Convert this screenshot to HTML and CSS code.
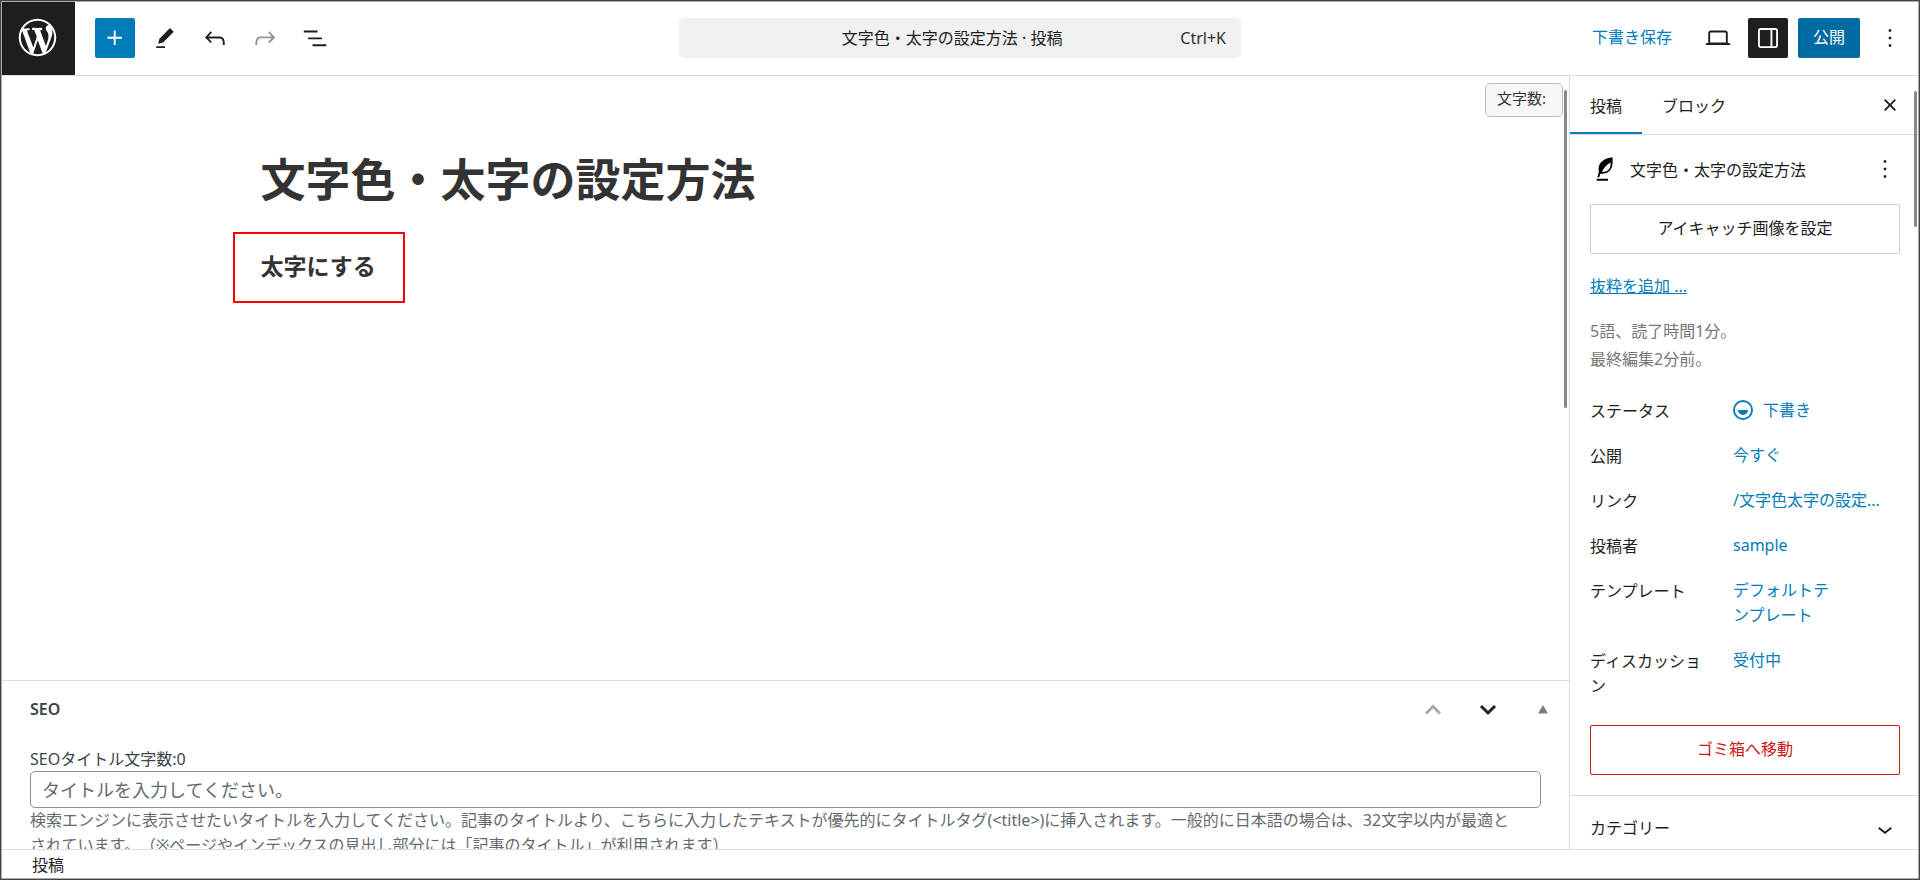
FILE: index.html
```html
<!DOCTYPE html>
<html lang="ja">
<head>
<meta charset="utf-8">
<title>文字色・太字の設定方法 · 投稿</title>
<link rel="stylesheet" href="styles.css">
</head>
<body>
<div class="app">
  <header class="header">
    <a class="logo" href="#" aria-label="投稿一覧">
      <svg viewBox="-2 -2 24 24"><path d="M20 10c0-5.51-4.49-10-10-10C4.48 0 0 4.49 0 10c0 5.52 4.48 10 10 10 5.51 0 10-4.48 10-10zM7.78 15.37L4.37 6.22c.55-.02 1.17-.08 1.17-.08.5-.06.44-1.13-.06-1.11 0 0-1.45.11-2.37.11-.18 0-.37 0-.58-.01C4.12 2.69 6.87 1.11 10 1.11c2.33 0 4.45.87 6.05 2.34-.68-.11-1.65.39-1.65 1.58 0 .74.45 1.36.9 2.1.35.61.55 1.36.55 2.46 0 1.49-1.4 5-1.4 5l-3.03-8.37c.54-.02.82-.17.82-.17.5-.05.44-1.25-.06-1.22 0 0-1.44.12-2.38.12-.87 0-2.33-.12-2.33-.12-.5-.03-.56 1.2-.06 1.22l.92.08 1.26 3.41zM17.41 10c.24-.64.74-1.87.43-4.25.7 1.29 1.05 2.71 1.05 4.25 0 3.29-1.73 6.24-4.4 7.78.97-2.59 1.94-5.2 2.92-7.78zM6.1 18.09C3.12 16.65 1.11 13.53 1.11 10c0-1.3.23-2.48.72-3.59C3.25 10.3 4.67 14.2 6.1 18.09zm4.03-6.63l2.58 6.98c-.86.29-1.76.45-2.71.45-.79 0-1.57-.11-2.29-.33.81-2.38 1.62-4.74 2.42-7.1z"/></svg>
    </a>
    <div class="tools tools-left">
      <button class="icon-button add" type="button" aria-label="ブロックを追加"><svg class="icon" viewBox="0 0 24 24"><path d="M11 12.5V17.5H12.5V12.5H17.5V11H12.5V6H11V11H6V12.5H11Z"/></svg></button>
      <button class="icon-button" type="button" aria-label="ツール"><svg class="icon" viewBox="0 0 24 24"><path d="m19 7-3-3-8.5 8.5-1 4 4-1L19 7Zm-7 11.5H5V20h7v-1.5Z"/></svg></button>
      <button class="icon-button" type="button" aria-label="元に戻す"><svg class="icon" viewBox="0 0 24 24"><path d="M18.3 11.7c-.6-.6-1.4-.9-2.3-.9H6.7l2.9-3.3-1.1-1-4.5 5L8.5 16l1-1-2.7-2.7H16c.5 0 .9.2 1.3.5 1 1 1 3.4 1 4.5v.3h1.5v-.2c0-1.5 0-4.3-1.5-5.7z"/></svg></button>
      <button class="icon-button" type="button" aria-label="やり直す" disabled><svg class="icon" viewBox="0 0 24 24"><path d="M15.6 6.5l-1.1 1 2.9 3.3H8c-.9 0-1.7.3-2.3.9-1.4 1.5-1.4 4.2-1.4 5.6v.2h1.5v-.3c0-1.1 0-3.5 1-4.5.3-.3.7-.5 1.3-.5h9.2L14.5 15l1.1 1.1 4.6-4.6-4.6-5z"/></svg></button>
      <button class="icon-button" type="button" aria-label="ドキュメント概観"><svg class="icon" viewBox="0 0 24 24"><path d="M3 6h11v1.5H3V6Zm3.5 5.5h11V13h-11v-1.5ZM21 17H10v1.5h11V17Z"/></svg></button>
    </div>
    <button class="command" type="button"><span class="command-title">文字色・太字の設定方法 · 投稿</span><span class="command-key">Ctrl+K</span></button>
    <div class="tools tools-right">
      <button class="text-button" type="button">下書き保存</button>
      <button class="icon-button" type="button" aria-label="表示"><svg class="icon" viewBox="0 0 24 24"><path d="M20.5 16h-.7V8c0-1.1-.9-2-2-2H6.2c-1.1 0-2 .9-2 2v8h-.7c-.8 0-1.5.7-1.5 1.5h20c0-.8-.7-1.5-1.5-1.5zM5.7 8c0-.3.2-.5.5-.5h11.6c.3 0 .5.2.5.5v7.6H5.7V8z"/></svg></button>
      <button class="icon-button pressed" type="button" aria-label="設定" aria-pressed="true"><svg class="icon" viewBox="0 0 24 24"><path fill-rule="evenodd" d="M18 4H6c-1.1 0-2 .9-2 2v12c0 1.1.9 2 2 2h12c1.1 0 2-.9 2-2V6c0-1.1-.9-2-2-2zm-4 14.5H6c-.3 0-.5-.2-.5-.5V6c0-.3.2-.5.5-.5h8v13zm4.5-.5c0 .3-.2.5-.5.5h-2.5v-13H18c.3 0 .5.2.5.5v12z"/></svg></button>
      <button class="publish" type="button">公開</button>
      <button class="icon-button" type="button" aria-label="オプション"><svg class="icon" viewBox="0 0 24 24"><path d="M13 19h-2v-2h2v2zm0-6h-2v-2h2v2zm0-6h-2V5h2v2z"/></svg></button>
    </div>
  </header>

  <div class="body">
    <main class="editor">
      <section class="canvas">
        <div class="post">
          <h1 class="post-title">文字色・太字の設定方法</h1>
          <p class="post-block"><strong>太字にする</strong></p>
        </div>
        <div class="char-count">文字数:</div>
        <div class="scrollbar canvas-scrollbar"></div>
      </section>
      <section class="metabox">
        <div class="metabox-header">
          <h2 class="metabox-title">SEO</h2>
          <div class="metabox-actions">
            <button class="metabox-button" type="button" aria-label="上に移動" disabled><svg class="arrow" viewBox="0 0 20 20"><path d="M3 13.500l7-7 7 7"/></svg></button>
            <button class="metabox-button" type="button" aria-label="下に移動"><svg class="arrow" viewBox="0 0 20 20"><path d="M3 6l7 7 7-7"/></svg></button>
            <button class="metabox-button" type="button" aria-label="パネルを切り替え"><svg class="triangle" viewBox="0 0 20 20"><path d="M10 5l5 8.500H5z"/></svg></button>
          </div>
        </div>
        <div class="metabox-content">
          <label class="field-label" for="seo-title">SEOタイトル文字数:0</label>
          <input class="field-input" id="seo-title" type="text" placeholder="タイトルを入力してください。">
          <p class="field-help">検索エンジンに表示させたいタイトルを入力してください。記事のタイトルより、こちらに入力したテキストが優先的にタイトルタグ(&lt;title&gt;)に挿入されます。一般的に日本語の場合は、32文字以内が最適と<br>されています。（※ページやインデックスの見出し部分には「記事のタイトル」が利用されます）</p>
        </div>
      </section>
    </main>

    <aside class="sidebar">
      <div class="tabs">
        <button class="tab active" type="button">投稿</button>
        <button class="tab" type="button">ブロック</button>
        <button class="icon-button close" type="button" aria-label="設定を閉じる"><svg class="icon" viewBox="0 0 24 24"><path d="M12 13.06l3.712 3.713 1.061-1.06L13.061 12l3.712-3.712-1.06-1.06L12 10.938 8.288 7.227l-1.061 1.06L10.939 12l-3.712 3.712 1.06 1.061L12 13.061z"/></svg></button>
      </div>
      <div class="panel">
        <div class="card">
          <svg class="icon quill" viewBox="0 0 24 24"><path fill-rule="evenodd" d="M18 2.500C12.500 3.200 8.500 5.600 7.300 9.200c-.6 1.900-.5 3.800-.2 5.300L5.800 18.500h1.500l1-2.700c3.600.2 6.800-.8 8.400-3.600C18.200 9.500 18.300 6 18 2.500zM16.500 6.800c.1 2-.3 4-1.300 5.300-1.200 1.600-3.200 2.300-5.600 2.200 1.500-3.300 3.600-5.900 6.900-7.500zM5.400 19.800h9v1.500h-9z"/></svg>
          <h2 class="card-title">文字色・太字の設定方法</h2>
          <button class="icon-button" type="button" aria-label="操作"><svg class="icon" viewBox="0 0 24 24"><path d="M13 19h-2v-2h2v2zm0-6h-2v-2h2v2zm0-6h-2V5h2v2z"/></svg></button>
        </div>
        <button class="wide-button" type="button">アイキャッチ画像を設定</button>
        <a class="excerpt-link" href="#">抜粋を追加 ...</a>
        <p class="stats">5語、読了時間1分。<br>最終編集2分前。</p>
        <dl class="rows">
          <div class="row"><dt>ステータス</dt><dd><button class="value" type="button"><svg class="icon" viewBox="0 0 24 24"><path fill-rule="evenodd" d="M12 18.500a6.500 6.500 0 1 1 0-13 6.500 6.500 0 0 1 0 13ZM4 12a8 8 0 1 1 16 0 8 8 0 0 1-16 0Zm8 4a4 4 0 0 0 4-4H8a4 4 0 0 0 4 4Z"/></svg>下書き</button></dd></div>
          <div class="row"><dt>公開</dt><dd><button class="value" type="button">今すぐ</button></dd></div>
          <div class="row"><dt>リンク</dt><dd><button class="value" type="button">/文字色太字の設定...</button></dd></div>
          <div class="row"><dt>投稿者</dt><dd><button class="value" type="button">sample</button></dd></div>
          <div class="row"><dt>テンプレート</dt><dd><button class="value" type="button">デフォルトテ<br>ンプレート</button></dd></div>
          <div class="row"><dt>ディスカッション</dt><dd><button class="value" type="button">受付中</button></dd></div>
        </dl>
        <button class="wide-button danger" type="button">ゴミ箱へ移動</button>
      </div>
      <button class="section-toggle" type="button">カテゴリー<svg class="icon" viewBox="0 0 24 24"><path d="M17.500 11.600L12 16l-5.500-4.400.9-1.200L12 14l4.500-3.600 1 1.200z"/></svg></button>
      <div class="scrollbar sidebar-scrollbar"></div>
    </aside>
  </div>

  <footer class="footer">投稿</footer>
</div>
</body>
</html>
```

FILE: styles.css
```css
* {
  box-sizing: border-box;
}

body {
  margin: 0;
  border: 1px solid #444;
  background: #fff;
  color: #1e1e1e;
  font-family: "Noto Sans", "Noto Sans CJK JP", sans-serif;
  font-size: 16px;
  line-height: 25px;
  text-spacing-trim: space-all;
}

h1, h2, p, dl, dd {
  margin: 0;
}

button {
  margin: 0;
  padding: 0;
  border: 0;
  background: none;
  color: inherit;
  font: inherit;
  cursor: pointer;
}

svg {
  display: block;
  flex: none;
  fill: currentColor;
}

.app {
  display: flex;
  flex-direction: column;
  height: calc(100vh - 2px);
  border: 1px solid #aaa;
  overflow: hidden;
}

.icon {
  width: 30px;
  height: 30px;
}

/* Header */

.header {
  display: grid;
  grid-template-columns: 1fr minmax(0, 562px) 1fr;
  align-items: center;
  flex: none;
  border-bottom: 1px solid #ddd;
}

.logo,
.tools-left {
  grid-row: 1;
  grid-column: 1;
}

.logo {
  display: grid;
  place-items: center;
  width: 73px;
  height: 73px;
  padding: 0 2px 2px 0;
  background: #1e1e1e;
  color: #fff;
}

.logo svg {
  width: 45px;
  height: 45px;
}

.tools {
  display: flex;
  align-items: center;
  gap: 10px;
  padding-bottom: 1px;
}

.tools-left {
  margin-left: 93px;
}

.tools-right {
  justify-content: flex-end;
  padding-right: 8px;
}

.icon-button {
  display: grid;
  place-items: center;
  flex: none;
  width: 40px;
  height: 40px;
  border-radius: 2px;
}

.icon-button:disabled {
  color: #949494;
}

.add {
  background: #007cba;
  color: #fff;
}

.pressed {
  background: #1e1e1e;
  color: #fff;
}

.command {
  display: flex;
  align-items: center;
  height: 40px;
  margin-bottom: 1px;
  padding: 0 15px 0 45px;
  border-radius: 5px;
  background: #f0f0f0;
}

.command-title {
  flex: 1;
}

.command-key {
  color: #2f2f2f;
}

.text-button {
  height: 40px;
  padding: 0 16px 2px;
  color: #007cba;
}

.publish {
  height: 40px;
  padding: 0 15px 2px;
  border-radius: 2px;
  background: #006ba1;
  color: #fff;
}

/* Editor */

.body {
  display: flex;
  flex: 1;
  min-height: 0;
}

.editor {
  display: flex;
  flex: 1;
  flex-direction: column;
  min-width: 0;
}

.canvas {
  position: relative;
  flex: 1;
  padding-top: 69px;
}

.post {
  width: 67%;
  margin: 0 auto;
  color: #333;
}

.post-title {
  font-size: 45px;
  line-height: 70px;
}

.post-block {
  width: fit-content;
  margin: 17px 0 0 -28px;
  padding: 17px 27px 20px 26px;
  border: 2px solid #f00;
  font-size: 23px;
  line-height: 30px;
}

.char-count {
  position: absolute;
  top: 7px;
  right: 6px;
  padding: 2px 16px 5px 11px;
  border: 1px solid #bbb;
  border-radius: 5px;
  background: #f7f7f7;
  color: #333;
  font-size: 15px;
}

.scrollbar {
  position: absolute;
  width: 3px;
  border-radius: 2px;
  background: #888;
}

.canvas-scrollbar {
  top: 14px;
  right: 2px;
  height: 318px;
}

/* Meta box */

.metabox {
  flex: none;
  height: 169px;
  padding: 0 28px;
  border-top: 1px solid #ddd;
  overflow: hidden;
  color: #3c434a;
}

.metabox-header {
  display: flex;
  align-items: center;
  justify-content: space-between;
  height: 57px;
}

.metabox-title {
  font-size: 16px;
  font-weight: 600;
}

.metabox-actions {
  display: flex;
  gap: 10px;
  margin-right: -24px;
}

.metabox-button {
  display: grid;
  place-items: center;
  width: 45px;
  height: 45px;
  color: #1d2327;
}

.metabox-button:disabled {
  color: #a7aaad;
}

.arrow {
  width: 20px;
  height: 20px;
  fill: none;
  stroke: currentColor;
  stroke-width: 3;
}

.triangle {
  width: 20px;
  height: 20px;
  color: #787c82;
}

.metabox-content {
  padding-top: 10px;
}

.field-label {
  display: block;
  line-height: 23px;
}

.field-input {
  display: block;
  width: 100%;
  height: 37px;
  padding: 0 11px;
  border: 1px solid #8c8f94;
  border-radius: 5px;
  background: #fff;
  color: #2c3338;
  font: inherit;
  font-size: 18px;
}

.field-input::placeholder {
  color: #646970;
}

.field-help {
  color: #646970;
  white-space: nowrap;
}

/* Sidebar */

.sidebar {
  position: relative;
  flex: none;
  width: 349px;
  border-left: 1px solid #ddd;
  overflow: hidden;
}

.tabs {
  display: flex;
  align-items: stretch;
  height: 59px;
  padding-right: 8px;
  border-bottom: 1px solid #ddd;
}

.tab {
  padding: 2px 20px 0;
}

.tab.active {
  box-shadow: inset 0 -2px #007cba;
}

.close {
  align-self: center;
  margin-left: auto;
}

.panel {
  padding: 14px 18px 20px 20px;
  border-bottom: 1px solid #ddd;
}

.card {
  display: flex;
  align-items: center;
  gap: 10px;
  margin: 0 -5px 15px 0;
}

.quill {
  color: #000;
}

.card-title {
  flex: 1;
  padding-top: 2px;
  font-size: 16px;
  font-weight: 400;
}

.wide-button {
  display: block;
  width: 100%;
  height: 50px;
  padding-bottom: 2px;
  border: 1px solid #ccc;
  border-radius: 2px;
}

.excerpt-link {
  display: block;
  width: fit-content;
  margin-top: 20px;
  color: #007cba;
}

.stats {
  margin: 18px 0 17px;
  color: #757575;
  line-height: 28px;
}

.rows {
  display: grid;
  gap: 5px;
}

.row {
  display: grid;
  grid-template-columns: 113px 1fr;
  gap: 30px;
  min-height: 40px;
}

.row dt {
  padding: 9px 0 6px;
}

.value {
  display: flex;
  align-items: center;
  gap: 5px;
  padding: 8px 0 7px;
  color: #007cba;
  text-align: left;
}

.value .icon {
  margin: -3px 0 -2px -5px;
}

.danger {
  margin-top: 20px;
  border-color: #cc1818;
  color: #cc1818;
}

.section-toggle {
  display: flex;
  align-items: center;
  justify-content: space-between;
  width: 100%;
  height: 65px;
  padding: 0 18px 0 20px;
}

.sidebar-scrollbar {
  top: 15px;
  right: 1px;
  height: 136px;
}

/* Footer */

.footer {
  flex: none;
  padding: 3px 30px 0;
  border-top: 1px solid #ddd;
}
```
